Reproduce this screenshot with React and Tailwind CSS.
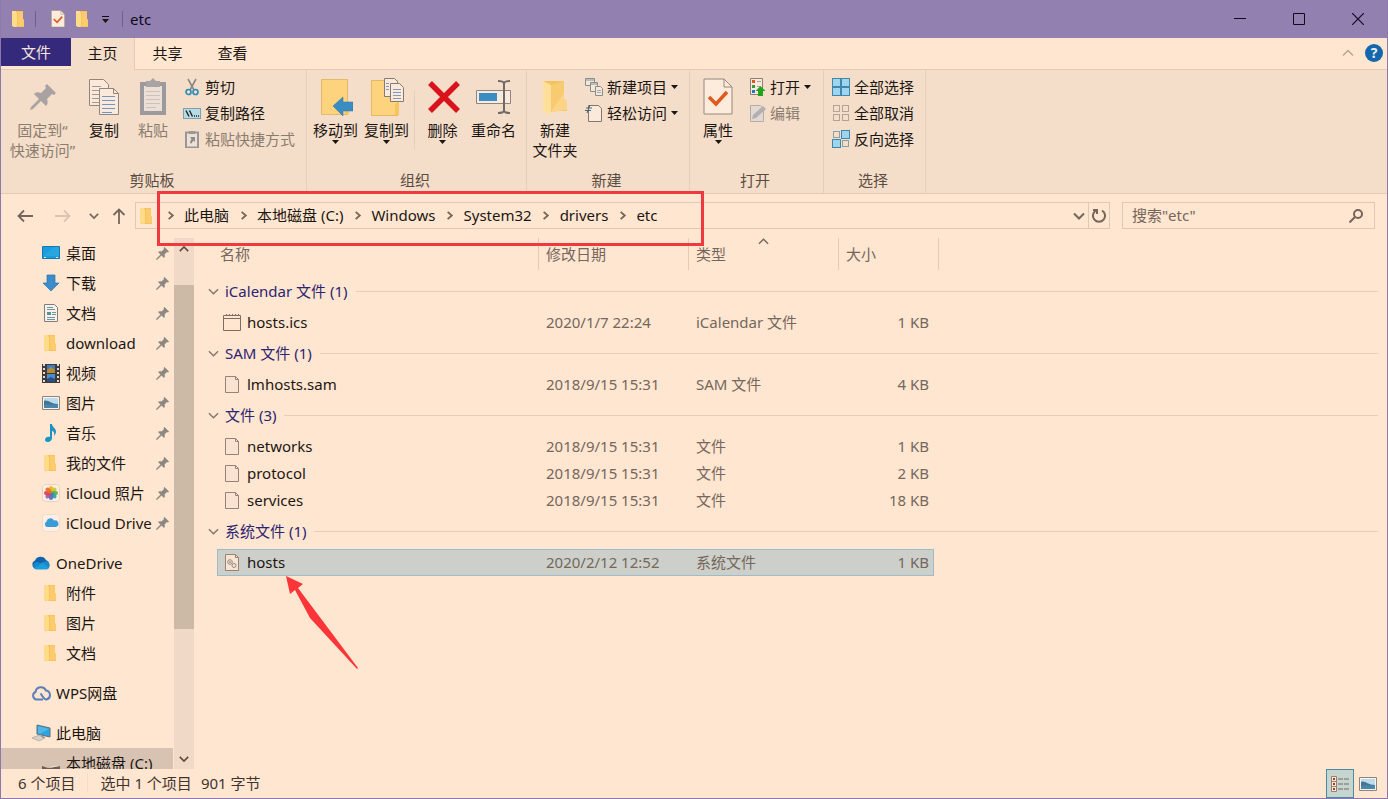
import clsx from 'clsx';

/* ---------- icons ---------- */

function FolderIcon({ className = 'w-[18px] h-[18px]' }) {
  return (
    <svg className={className} viewBox="0 0 18 18">
      <path d="M2 1h11v8l1 1v7H3z" fill="#f9c25c" />
      <path d="M2 1h4l1 3v12l-1 1-4-1z" fill="#ffdb8c" />
      <path d="M8 2h5v7l1 1v6H8z" fill="#fbcb6c" />
    </svg>
  );
}

function PinIcon({ className = 'w-[14px] h-[14px]' }) {
  return (
    <svg className={className} viewBox="0 0 26 26" fill="currentColor">
      <path d="M17 0l9 9-2 2-2-1-5 5c1 3 1 5-1 7l-5-5-8 8-3 1 1-3 8-8-5-5c2-2 4-2 7-1l5-5-1-2z" />
    </svg>
  );
}

function CheckDocIcon({ className }) {
  return (
    <svg className={className} viewBox="0 0 30 38">
      <path d="M1 1h20l8 8v27H1z" fill="#fdebdc" stroke="#94887c" />
      <path d="M21 1v8h8" fill="none" stroke="#94887c" />
      <path d="M6 19l7 7L24 14" fill="none" stroke="#e05a1f" strokeWidth="3.5" />
    </svg>
  );
}

function CopyIcon() {
  return (
    <svg className="w-8 h-[38px]" viewBox="0 0 32 38" fill="#fbeadb" stroke="#92867c">
      <path d="M1.500 1.500h14l5 5v21h-19z" />
      <path d="M4 8.500h9M4 12.500h9M4 16.500h9M4 20.500h9M4 24.500h9" stroke="#a59a92" />
      <path d="M11.500 10.500h14l5 5v21h-19z" />
      <path d="M25.500 10.500v5h5" fill="none" />
      <path d="M14 18.500h13M14 22.500h13M14 26.500h13M14 30.500h13M14 34.500h10" stroke="#6f96c4" />
    </svg>
  );
}

function PasteIcon() {
  return (
    <svg className="w-7 h-[38px]" viewBox="0 0 28 38">
      <path d="M1 4h26v33H1z" fill="#9c9a9d" />
      <path d="M5 8h18v25H5z" fill="#ecdfd5" />
      <path d="M7 3h4l3-3 3 3h4v6H7z" fill="#aaa5a5" />
      <path d="M7 13.500h14M7 17.500h14M7 21.500h14M7 25.500h14M7 29.500h10" stroke="#cdc2ba" />
    </svg>
  );
}

function ScissorsIcon() {
  return (
    <svg className="w-[18px] h-[18px]" viewBox="0 0 18 18" fill="none">
      <path d="M5 1l6 11M13 1L7 12" stroke="#8c8782" strokeWidth="1.600" />
      <circle cx="5.500" cy="14" r="2.500" stroke="#2f8dbb" strokeWidth="1.700" />
      <circle cx="12.500" cy="14" r="2.500" stroke="#2f8dbb" strokeWidth="1.700" />
    </svg>
  );
}

function CopyPathIcon() {
  return (
    <svg className="w-[18px] h-[18px]" viewBox="0 0 18 18">
      <rect x=".5" y="4.500" width="17" height="10" fill="#b9dbe4" stroke="#7ca2ad" />
      <path d="M3 6.500l3 6M6.500 6.500l3 6" stroke="#1e2226" strokeWidth="1.400" />
      <path d="M11 12h1M13 12h1M15 12h1" stroke="#1e2226" strokeWidth="1.400" />
    </svg>
  );
}

function PasteShortcutIcon() {
  return (
    <svg className="w-[18px] h-[18px]" viewBox="0 0 18 18">
      <path d="M3 2.500h12v15H3z" fill="#eee0d5" stroke="#9b9795" strokeWidth="2" />
      <path d="M6 1h6v3H6z" fill="#9b9795" />
      <path d="M7 7h5v5l-1.500-1.500L8 14l-1-2 1.500-3z" fill="#8d8a8c" />
    </svg>
  );
}

function MoveToIcon() {
  return (
    <svg className="w-[34px] h-[38px]" viewBox="0 0 34 38">
      <path d="M2.500 1.500h26v35h-26z" fill="#fdd47d" stroke="#e3b968" />
      <path d="M26 25l4-2v13h-4z" fill="#f7c560" />
      <path d="M14 28l10-9v5h10v9H24v5z" fill="#3a8dc3" stroke="#2c74a5" strokeWidth=".5" />
    </svg>
  );
}

function CopyToIcon() {
  return (
    <svg className="w-[34px] h-10" viewBox="0 0 34 40">
      <path d="M1.500 3.500h26v35h-26z" fill="#fdd47d" stroke="#e3b968" />
      <path d="M25 27l4-2v13h-4z" fill="#f7c560" />
      <g fill="#fbeadb" stroke="#857b72">
        <path d="M14.500 1.500h10l3 3v15h-13z" />
        <path d="M20.500 6.500h9l4 4v14h-13z" />
      </g>
      <path d="M16 6.500h3M16 9.500h3M16 12.500h3M23 12.500h8M23 15.500h8M23 18.500h8M23 21.500h8" stroke="#7d9cbc" />
    </svg>
  );
}

function DeleteIcon() {
  return (
    <svg className="w-[34px] h-8" viewBox="0 0 34 32">
      <path d="M4 2l28 28M32 2L4 30" stroke="#d9121b" strokeWidth="5.500" />
    </svg>
  );
}

function RenameIcon() {
  return (
    <svg className="w-[37px] h-9" viewBox="0 0 37 36" fill="none">
      <path d="M1.500 11.500h34v13h-34z" fill="#fbeadb" stroke="#8d8680" />
      <path d="M4 14h18v8H4z" fill="#3a8dc3" />
      <path d="M23 2c3 0 5 0 6 2 1-2 3-2 6-2M23 34c3 0 5 0 6-2 1 2 3 2 6 2M29 3v30" stroke="#6f6a68" strokeWidth="2" />
    </svg>
  );
}

function NewFolderIcon() {
  return (
    <svg className="w-7 h-9" viewBox="0 0 28 36">
      <path d="M3 2h20v18l3 2v10H6z" fill="#f5c15c" />
      <path d="M2 2l8 4v28l-2 2-6-4z" fill="#ffe09a" />
      <path d="M10 6l13-4v18l3 2v9l-16 2z" fill="#f8cb70" />
      <path d="M11 31L23 14v6l3 2v9l-15 2z" fill="#fddb92" opacity=".6" />
    </svg>
  );
}

function NewItemIcon() {
  return (
    <svg className="w-[18px] h-[18px]" viewBox="0 0 18 18" fill="#f7e6d6" stroke="#84908f">
      <path d="M.5.500h9v7h-9zM1 2h8" />
      <path d="M5.500 4.500h7v9h-7zM5 6h8" />
      <path d="M10.500 8.500h5l2 2v7h-7z" />
      <path d="M12 12.500h4M12 14.500h4" strokeWidth=".7" />
    </svg>
  );
}

function EasyAccessIcon() {
  return (
    <svg className="w-[18px] h-[18px]" viewBox="0 0 18 18" fill="none">
      <path d="M3.500 1.500h10l3 3v13h-13z" fill="#fbeadb" stroke="#84786e" />
      <path d="M0 6.500h6M1 4h6M5 1L2 9" stroke="#4d6676" />
    </svg>
  );
}

function OpenIcon() {
  return (
    <svg className="w-[18px] h-[18px]" viewBox="0 0 18 18">
      <path d="M2.500.500h12v16h-12z" fill="#fbeadb" stroke="#8b8078" />
      <path d="M4 2h3v3H4z" fill="#e3541f" />
      <path d="M4 7h3v3H4z" fill="#2e9d42" />
      <path d="M4 12h3v3H4z" fill="#2b78b7" />
      <path d="M9 3.500h4M9 8.500h3" stroke="#a8a099" />
      <path d="M12.500 8l5 5H15v5h-5v-5H7.500z" fill="#22a31f" />
    </svg>
  );
}

function EditIcon() {
  return (
    <svg className="w-[18px] h-[18px]" viewBox="0 0 18 18">
      <path d="M2.500 1.500h10l3 3v13h-13z" fill="#e4d9d2" stroke="#b5aca6" />
      <path d="M4 15l1-4 10-9 3 3-10 9z" fill="#b3aeb0" />
    </svg>
  );
}

// each cell is lit when its entry in `on` is truthy
function SelectGridIcon({ on, blueEmpty }) {
  const cells = [[1, 1], [10, 1], [1, 10], [10, 10]];
  return (
    <svg className="w-[18px] h-[18px]" viewBox="0 0 18 18">
      {cells.map(([x, y], i) =>
        on[i] ? (
          <rect key={i} x={x - 0.5} y={y - 0.5} width="8" height="8" fill="#9fd4ee" stroke="#3f87ab" />
        ) : (
          <rect key={i} x={x + 0.5} y={y + 0.5} width="6" height="6" fill="none" stroke={blueEmpty ? '#8e9ea5' : '#b3a295'} />
        )
      )}
    </svg>
  );
}

function ChevronIcon({ dir = 'down', className = 'w-3 h-3', width = 2 }) {
  const paths = {
    down: 'M1 3.500L6 8.500 11 3.500',
    up: 'M1 8.500L6 3.500 11 8.500',
    right: 'M4 2L8.500 6 4 10',
  };
  return (
    <svg className={className} viewBox="0 0 12 12" fill="none" stroke="currentColor" strokeWidth={width}>
      <path d={paths[dir]} />
    </svg>
  );
}

function Caret({ className = 'w-[7px] h-1' }) {
  return (
    <svg className={className} viewBox="0 0 7 4" fill="#1c1613">
      <path d="M0 0h7L3.500 4z" />
    </svg>
  );
}

function DesktopIcon() {
  return (
    <svg className="w-[18px] h-[18px]" viewBox="0 0 18 18">
      <path d="M.5 2.500h17v12H.5z" fill="#189ddd" stroke="#1577aa" />
      <path d="M1 12L12 3h5v9z" fill="#35b0e8" opacity=".5" />
      <path d="M2 13.500h2M14 13.500h2" stroke="#d5edf8" />
    </svg>
  );
}

function DownloadIcon() {
  return (
    <svg className="w-[18px] h-[18px]" viewBox="0 0 18 18">
      <path d="M5 1h8v8h4l-8 8-8-8h4z" fill="#3a8ccb" stroke="#2a70a8" strokeWidth=".7" />
    </svg>
  );
}

function DocumentIcon() {
  return (
    <svg className="w-[18px] h-[18px]" viewBox="0 0 18 18">
      <path d="M2.500.500h10l3 3v14h-13z" fill="#fbf0e6" stroke="#7b7f80" />
      <path d="M5 3.500h6M5 5.500h8M10 8.500h4M10 10.500h4M5 13.500h8M5 15.500h8" stroke="#6f93a8" />
      <path d="M5 8h4v3H5z" fill="#4f9795" />
    </svg>
  );
}

function VideoIcon() {
  return (
    <svg className="w-[18px] h-[19px]" viewBox="0 0 18 19">
      <path d="M0 0h18v19H0z" fill="#3d3a38" />
      <path d="M2 0v19M16 0v19" stroke="#e8d8c8" strokeWidth="2" strokeDasharray="2 2" />
      <path d="M5 1h8v8H5z" fill="#3d7bc4" />
      <path d="M5 6l4-3 4 3v3H5z" fill="#b78a35" />
      <path d="M5 10h8v8H5z" fill="#4a8ed0" />
      <path d="M5 15l4-2 4 2v3H5z" fill="#2b4d80" />
    </svg>
  );
}

function PictureIcon() {
  return (
    <svg className="w-[18px] h-[14px]" viewBox="0 0 18 14">
      <path d="M.5.500h17v13H.5z" fill="#fbf2ea" stroke="#90857b" />
      <path d="M2 2h14v10H2z" fill="#bcdcee" />
      <path d="M2 5c4-2 6 3 14 3v2H2z" fill="#44768f" />
      <path d="M2 9c5-1 9 0 14-1v4H2z" fill="#4a86b0" />
    </svg>
  );
}

function MusicIcon() {
  return (
    <svg className="w-[18px] h-[18px]" viewBox="0 0 18 18">
      <path d="M8 0h2c0 3 4 4 4 8 0 1-1 3-2 4 1-4-1-5-2-5v7c0 2-2 4-4 4s-3-1-3-2c0-2 2-4 5-3z" fill="#1b93c4" />
    </svg>
  );
}

function PhotosIcon() {
  const petals = ['#f7b01e', '#c3cc28', '#5db246', '#2f9fa6', '#4a73bd', '#9a5aa8', '#db3f58', '#ee6a25'];
  return (
    <svg className="w-[18px] h-[18px]" viewBox="0 0 18 18">
      <rect x=".5" y=".5" width="17" height="17" rx="3" fill="#fdefe3" stroke="#e5d2c2" />
      {petals.map((color, i) => (
        <ellipse key={color} cx="9" cy="5.500" rx="2.300" ry="3.500" fill={color} opacity=".9" transform={`rotate(${i * 45} 9 9)`} />
      ))}
    </svg>
  );
}

function ICloudIcon() {
  return (
    <svg className="w-[18px] h-[18px]" viewBox="0 0 18 18">
      <rect x=".5" y=".5" width="17" height="17" rx="3" fill="#fdefe3" stroke="#eedccd" />
      <path d="M5 13a3 3 0 0 1-.5-5.500A4 4 0 0 1 12 6.500a3.300 3.300 0 0 1 2 6.500z" fill="#3b9bd8" />
    </svg>
  );
}

function OneDriveIcon() {
  return (
    <svg className="w-5 h-[14px]" viewBox="0 0 20 14">
      <path d="M5 13a4.500 4.500 0 0 1-1-8.500A6 6 0 0 1 15 4a5 5 0 0 1 1 9z" fill="#0f63ad" />
      <path d="M4 13a4 4 0 0 1 1-7l5 1 5-2a4.200 4.200 0 0 1 1 8z" fill="#1b86c8" />
      <path d="M3 12l9-5 6 5-2 1.500H5z" fill="#1a9fdc" />
    </svg>
  );
}

function WpsCloudIcon() {
  return (
    <svg className="w-5 h-4" viewBox="0 0 20 16" fill="none" stroke="#5b7fb8" strokeWidth="2">
      <path d="M12 14.500H5a4 4 0 0 1-.5-7.500A5.500 5.500 0 0 1 15 5.500a4.600 4.600 0 0 1 .5 9c-3 0-4-4-6-6" />
    </svg>
  );
}

function ComputerIcon() {
  return (
    <svg className="w-5 h-[18px]" viewBox="0 0 20 18">
      <path d="M6 1l13 3v9L6 10z" fill="#2fa3df" stroke="#5c6f7c" />
      <path d="M7 2l11 3-9 5-2-1z" fill="#62bdea" opacity=".7" />
      <path d="M1 14l7-3 6 3-6 3z" fill="#d8d0ca" stroke="#a59a90" strokeWidth=".6" />
      <path d="M10 12l4 1-2 1z" fill="#85796f" />
    </svg>
  );
}

function DriveIcon() {
  return (
    <svg className="w-[18px] h-2" viewBox="0 0 18 8">
      <path d="M0 1l6 2 12-2v5l-9 2-9-2z" fill="#6b5d55" />
      <path d="M7 3l11-2H10z" fill="#e8dccf" />
    </svg>
  );
}

function FileIcon({ kind }) {
  if (kind === 'calendar') {
    return (
      <svg className="w-[18px] h-[18px]" viewBox="0 0 18 18" fill="none" stroke="#7d6c61">
        <path d="M.5 1.500h17v15H.5zM.5 4.500h17M3.500 0v2M6.500 0v2M9.500 0v2M12.500 0v2M15.500 0v2" />
      </svg>
    );
  }
  return (
    <svg className="w-[18px] h-[18px]" viewBox="0 0 18 18" fill="none" stroke="#95837a">
      <path d="M2.500.500h10l3 3v13h-13z" fill="#fbe3d2" />
      <path d="M12.500.500v3h3" />
      {kind === 'system' && (
        <g stroke="#8d8a88">
          <circle cx="7" cy="8" r="2.300" />
          <circle cx="11" cy="11.500" r="2" />
          <circle cx="7" cy="8" r=".5" />
        </g>
      )}
    </svg>
  );
}

/* ---------- data ---------- */

const quickAccess = [
  { name: '桌面', icon: <DesktopIcon /> },
  { name: '下载', icon: <DownloadIcon /> },
  { name: '文档', icon: <DocumentIcon /> },
  { name: 'download', icon: <FolderIcon className="w-[18px] h-[18px]" /> },
  { name: '视频', icon: <VideoIcon /> },
  { name: '图片', icon: <PictureIcon /> },
  { name: '音乐', icon: <MusicIcon /> },
  { name: '我的文件', icon: <FolderIcon className="w-[18px] h-[18px]" /> },
  { name: 'iCloud 照片', icon: <PhotosIcon /> },
  { name: 'iCloud Drive', icon: <ICloudIcon /> },
];

const oneDrive = ['附件', '图片', '文档'];

const crumbs = ['此电脑', '本地磁盘 (C:)', 'Windows', 'System32', 'drivers', 'etc'];

const groups = [
  {
    title: 'iCalendar 文件 (1)',
    files: [{ name: 'hosts.ics', date: '2020/1/7 22:24', type: 'iCalendar 文件', size: '1 KB', kind: 'calendar' }],
  },
  {
    title: 'SAM 文件 (1)',
    files: [{ name: 'lmhosts.sam', date: '2018/9/15 15:31', type: 'SAM 文件', size: '4 KB' }],
  },
  {
    title: '文件 (3)',
    files: [
      { name: 'networks', date: '2018/9/15 15:31', type: '文件', size: '1 KB' },
      { name: 'protocol', date: '2018/9/15 15:31', type: '文件', size: '2 KB' },
      { name: 'services', date: '2018/9/15 15:31', type: '文件', size: '18 KB' },
    ],
  },
  {
    title: '系统文件 (1)',
    files: [{ name: 'hosts', date: '2020/2/12 12:52', type: '系统文件', size: '1 KB', kind: 'system', selected: true }],
  },
];

/* ---------- title bar ---------- */

function TitleBar() {
  return (
    <header className="h-[38px] shrink-0 flex items-center bg-[#9180b0] text-[#12091f]">
      <div className="flex items-center pl-[9px]">
        <FolderIcon />
        <span className="w-px h-4 ml-[7px] mr-[14px] bg-[#6f608c]" />
        <button aria-label="属性"><CheckDocIcon className="w-4 h-[18px]" /></button>
        <button aria-label="新建文件夹" className="ml-2"><FolderIcon /></button>
        <button aria-label="自定义快速访问工具栏" className="ml-[10px] flex flex-col items-center gap-0.5">
          <span className="w-[7px] h-px bg-[#12091f]" />
          <Caret />
        </button>
        <span className="w-px h-4 ml-[13px] mr-[7px] bg-[#6f608c]" />
        <h1>etc</h1>
      </div>
      <div className="ml-auto flex h-full">
        <button aria-label="最小化" className="w-[59px] flex items-center justify-center">
          <svg className="w-3 h-3" viewBox="0 0 12 12" stroke="currentColor"><path d="M0 5.500h12" /></svg>
        </button>
        <button aria-label="最大化" className="w-[59px] flex items-center justify-center">
          <svg className="w-3 h-3" viewBox="0 0 12 12" fill="none" stroke="currentColor"><path d="M.5.500h11v11H.5z" /></svg>
        </button>
        <button aria-label="关闭" className="w-[59px] flex items-center justify-center">
          <svg className="w-3 h-3" viewBox="0 0 12 12" stroke="currentColor" strokeWidth="1.200"><path d="M0 0l12 12M12 0L0 12" /></svg>
        </button>
      </div>
    </header>
  );
}

/* ---------- ribbon ---------- */

function RibbonTabs() {
  return (
    <nav className="h-8 shrink-0 flex items-start border-b border-[#e3cbb8]">
      <button className="w-[70px] h-7 bg-[#35297b] text-[#f5e4dc]">文件</button>
      <button className="w-16 h-8 pb-0.5 border-r border-[#e3cbb8] bg-[#f4dec9]">主页</button>
      <button className="w-[65px] h-[30px]">共享</button>
      <button className="w-[65px] h-[30px]">查看</button>
      <div className="ml-auto h-[30px] flex items-center gap-[11px] pr-1">
        <button aria-label="折叠功能区" className="text-[#b9a595]"><ChevronIcon dir="up" width={1.5} /></button>
        <button aria-label="帮助" className="w-[18px] h-[18px] rounded-full bg-[#1467ad] text-[14px] leading-[18px] font-bold text-[#e8eef2]">?</button>
      </div>
    </nav>
  );
}

function BigButton({ icon, lines, width, caret, disabled }) {
  return (
    <button
      disabled={disabled}
      className={clsx('shrink-0 flex flex-col items-center leading-5 whitespace-nowrap', width, disabled && 'text-[#8b7c70]')}
    >
      <span className="h-[46px] flex items-center justify-center">{icon}</span>
      {lines.map(line => <span key={line}>{line}</span>)}
      {caret && <Caret />}
    </button>
  );
}

function SmallButton({ icon, label, caret, disabled }) {
  return (
    <button disabled={disabled} className={clsx('h-[26px] flex items-center gap-1 whitespace-nowrap', disabled && 'text-[#8b7c70]')}>
      {icon}
      <span>{label}</span>
      {caret && <Caret />}
    </button>
  );
}

function RibbonGroup({ label, width, children }) {
  return (
    <section className={clsx('shrink-0 flex flex-col border-r border-[#e6d0bd]', width)}>
      <div className="flex-1 flex items-start pt-1">{children}</div>
      <div className="h-[25px] pr-[3px] text-center leading-6 text-[#5a4c43]">{label}</div>
    </section>
  );
}

function Ribbon() {
  return (
    <div className="h-[124px] shrink-0 flex bg-[#f4dec9] border-b border-[#e3cbb8]">
      <RibbonGroup label="剪贴板" width="w-[306px]">
        <BigButton disabled width="w-[83px]" lines={['固定到“', '快速访问”']} icon={<PinIcon className="w-[26px] h-[26px] text-[#a8a3a2]" />} />
        <BigButton width="w-10" lines={['复制']} icon={<CopyIcon />} />
        <BigButton disabled width="w-[58px]" lines={['粘贴']} icon={<PasteIcon />} />
        <div className="flex flex-col pl-px">
          <SmallButton label="剪切" icon={<ScissorsIcon />} />
          <SmallButton label="复制路径" icon={<CopyPathIcon />} />
          <SmallButton disabled label="粘贴快捷方式" icon={<PasteShortcutIcon />} />
        </div>
      </RibbonGroup>
      <RibbonGroup label="组织" width="w-[220px]">
        <div className="flex pl-[3px]">
          <BigButton caret width="w-[51px]" lines={['移动到']} icon={<MoveToIcon />} />
          <BigButton caret width="w-[51px]" lines={['复制到']} icon={<CopyToIcon />} />
          <span className="w-px h-[60px] mt-4 mx-0.5 bg-[#e6d0bd]" />
          <BigButton caret width="w-[51px]" lines={['删除']} icon={<DeleteIcon />} />
          <BigButton width="w-[51px]" lines={['重命名']} icon={<RenameIcon />} />
        </div>
      </RibbonGroup>
      <RibbonGroup label="新建" width="w-[163px]">
        <BigButton width="w-[56px]" lines={['新建', '文件夹']} icon={<NewFolderIcon />} />
        <div className="flex flex-col pl-0.5">
          <SmallButton caret label="新建项目" icon={<NewItemIcon />} />
          <SmallButton caret label="轻松访问" icon={<EasyAccessIcon />} />
        </div>
      </RibbonGroup>
      <RibbonGroup label="打开" width="w-[134px]">
        <BigButton caret width="w-[56px]" lines={['属性']} icon={<CheckDocIcon className="w-[30px] h-[38px]" />} />
        <div className="flex flex-col pl-0.5">
          <SmallButton caret label="打开" icon={<OpenIcon />} />
          <SmallButton disabled label="编辑" icon={<EditIcon />} />
        </div>
      </RibbonGroup>
      <RibbonGroup label="选择" width="w-[102px]">
        <div className="flex flex-col pl-2">
          <SmallButton label="全部选择" icon={<SelectGridIcon on={[1, 1, 1, 1]} />} />
          <SmallButton label="全部取消" icon={<SelectGridIcon on={[0, 0, 0, 0]} />} />
          <SmallButton label="反向选择" icon={<SelectGridIcon on={[0, 1, 1, 0]} blueEmpty />} />
        </div>
      </RibbonGroup>
    </div>
  );
}

/* ---------- address bar ---------- */

function ArrowIcon({ className }) {
  return (
    <svg className={clsx('w-4 h-4', className)} viewBox="0 0 16 16" fill="none" stroke="currentColor" strokeWidth="1.800">
      <path d="M16 8H2M7 2.500L1.500 8 7 13.500" />
    </svg>
  );
}

function AddressRow() {
  return (
    <div className="relative h-11 shrink-0 flex items-start pt-2 pl-4 pr-3 text-[#75655a]">
      <div className="h-7 w-[118px] flex items-center">
        <button aria-label="后退"><ArrowIcon /></button>
        <button aria-label="前进" disabled className="ml-[22px] text-[#d9c4b3]"><ArrowIcon className="rotate-180" /></button>
        <button aria-label="最近浏览的位置" className="ml-[18px]"><ChevronIcon className="w-[10px] h-[10px]" /></button>
        <button aria-label="上移" className="ml-3"><ArrowIcon className="rotate-90" /></button>
      </div>

      <div className="flex-1 h-[27px] flex items-center border border-[#dfc8b6]">
        <FolderIcon className="w-[18px] h-[18px] ml-0.5" />
        <ol className="flex items-center text-[#1c1613]">
          {crumbs.map(crumb => (
            <li key={crumb} className="flex items-center">
              <span className="w-7 flex justify-center text-[#75655a]"><ChevronIcon dir="right" className="w-[11px] h-[11px]" /></span>
              <button className="pb-0.5 whitespace-nowrap">{crumb}</button>
            </li>
          ))}
        </ol>
        <button aria-label="以前的位置" className="ml-auto mr-[3px]"><ChevronIcon /></button>
        <button aria-label="刷新" className="w-[21px] h-full flex items-center justify-center border-l border-[#dfc8b6]">
          <svg className="w-[14px] h-[15px]" viewBox="0 0 14 15" fill="none" stroke="currentColor" strokeWidth="2">
            <path d="M10 2.500a6 6 0 1 1-6 0M1 2h4v4" />
          </svg>
        </button>
      </div>

      <label className="w-[253px] h-[27px] ml-3 flex items-center border border-[#dfc8b6] pl-[9px] pr-[11px]">
        <input type="search" aria-label="搜索" placeholder={'搜索"etc"'} className="min-w-0 flex-1 pb-0.5 bg-transparent outline-none placeholder:text-[#75655a]" />
        <svg className="w-[14px] h-[14px]" viewBox="0 0 14 14" fill="none" stroke="currentColor" strokeWidth="2">
          <circle cx="9" cy="5" r="4" />
          <path d="M6 8l-5.500 5.500" />
        </svg>
      </label>

      {/* highlight around the path */}
      <div className="absolute z-10 -top-[3px] left-[156px] w-[547px] h-[55px] border-[3px] border-[#ee3a3f] pointer-events-none" />
    </div>
  );
}

/* ---------- navigation pane ---------- */

function NavItem({ icon, name, root, pinned, active }) {
  return (
    <li className={clsx('h-[30px] flex items-center pr-1', root ? 'pl-[30px]' : 'pl-[41px]', active && 'bg-[#d8c3b2]')}>
      <span className={clsx('shrink-0 flex justify-center', root ? 'w-5 mr-[5px]' : 'w-[18px] mr-[6px]')}>{icon}</span>
      <a href="#" className="flex-1 min-w-0 overflow-hidden whitespace-nowrap">{name}</a>
      {pinned && <PinIcon className="w-[13px] h-[13px] shrink-0 ml-0.5 text-[#8d8782]" />}
    </li>
  );
}

function NavPane() {
  return (
    <aside className="w-[193px] shrink-0 flex min-h-0">
      <div className="w-[172px] overflow-hidden flex flex-col gap-[10px]">
        <ul>
          {quickAccess.map(item => <NavItem key={item.name} {...item} pinned />)}
        </ul>
        <ul>
          <NavItem root name="OneDrive" icon={<OneDriveIcon />} />
          {oneDrive.map(name => <NavItem key={name} name={name} icon={<FolderIcon />} />)}
        </ul>
        <ul>
          <NavItem root name="WPS网盘" icon={<WpsCloudIcon />} />
        </ul>
        <ul>
          <NavItem root name="此电脑" icon={<ComputerIcon />} />
          <NavItem active name="本地磁盘 (C:)" icon={<span className="pt-3"><DriveIcon /></span>} />
        </ul>
      </div>
      <div className="w-5 ml-px flex flex-col bg-[#f0dac7] text-[#5d4e44]">
        <button aria-label="向上滚动" className="h-5 flex items-end justify-center pb-1"><ChevronIcon dir="up" className="w-[10px] h-[10px]" /></button>
        <div className="flex-[27]" />
        <div className="flex-[344] bg-[#ccb9a6]" />
        <div className="flex-[120]" />
        <button aria-label="向下滚动" className="h-5 flex items-center justify-center"><ChevronIcon className="w-[10px] h-[10px]" /></button>
      </div>
    </aside>
  );
}

/* ---------- file list ---------- */

function FileRow({ file }) {
  const cell = clsx('p-0 align-top leading-[25px] whitespace-nowrap', file.selected ? 'bg-[#cdd0ca] border-y border-[#9dbcc8]' : 'border-y border-transparent');
  return (
    <tr className="h-[27px] text-[#75675d]">
      <td className="p-0" />
      <td className={clsx(cell, 'relative border-l')}>
        <div className="flex items-center gap-[6px] pl-[5px] text-[#1c1613]">
          <FileIcon kind={file.kind} />
          {file.name}
        </div>
        {file.selected && (
          <svg className="absolute top-[26px] left-[68px] w-[74px] h-[94px] pointer-events-none" viewBox="0 0 74 94">
            <path d="M0 0l17 8-5 4 60 80-1 1L24 42 9 14l-5 4z" fill="#fb3538" />
          </svg>
        )}
      </td>
      <td className={clsx(cell, 'pl-[7px]')}>{file.date}</td>
      <td className={clsx(cell, 'pl-[7px]')}>{file.type}</td>
      <td className={clsx(cell, 'pr-1 text-right border-r')}>{file.size}</td>
      <td className="p-0" colSpan={2} />
    </tr>
  );
}

function FileList() {
  const head = 'relative h-8 p-0 pl-[7px] border-r border-[#e3cbb8] text-left font-normal';
  return (
    <main className="flex-1 min-w-0 overflow-hidden">
      <table className="w-full table-fixed border-separate border-spacing-0">
        <colgroup>
          <col className="w-[23px]" />
          <col className="w-[322px]" />
          <col className="w-[150px]" />
          <col className="w-[150px]" />
          <col className="w-[95px]" />
          <col className="w-[5px]" />
          <col />
        </colgroup>
        <thead className="text-[#75675d]">
          <tr>
            <td className="p-0" />
            <th className="h-8 p-0 pl-[3px] border-r border-[#e3cbb8] text-left font-normal">名称</th>
            <th className={head}>修改日期</th>
            <th className={head}>
              类型
              <ChevronIcon dir="up" width={1.5} className="absolute -top-0.5 left-[69px] w-[11px] h-[11px]" />
            </th>
            <th className="h-8 p-0 pl-[7px] text-left font-normal">大小</th>
            <td className="p-0 border-r border-[#e3cbb8]" />
            <td className="p-0" />
          </tr>
          <tr className="h-1"><td colSpan={7} className="p-0" /></tr>
        </thead>
        {groups.map(group => (
          <tbody key={group.title}>
            <tr className="h-[35px]">
              <th colSpan={7} className="p-0 font-normal">
                <div className="flex items-center pl-[14px] pr-[9px] text-[#2b2470]">
                  <ChevronIcon width={1.5} className="w-[11px] h-[11px] text-[#85756a]" />
                  <span className="ml-[6px] mr-2 pb-0.5">{group.title}</span>
                  <span className="flex-1 h-px bg-[#e6cdbb]" />
                </div>
              </th>
            </tr>
            {group.files.map(file => <FileRow key={file.name} file={file} />)}
          </tbody>
        ))}
      </table>
    </main>
  );
}

/* ---------- status bar ---------- */

function StatusBar() {
  return (
    <footer className="h-[29px] shrink-0 flex items-center pl-[17px] text-[#3f352f]">
      <p className="flex items-center pb-0.5">
        <span>6 个项目</span>
        <span className="w-px h-5 mx-3 bg-[#f5dcc7]" />
        <span>选中 1 个项目</span>
        <span className="ml-[9px]">901 字节</span>
      </p>
      <div className="ml-auto h-full flex pr-[5px]">
        <button aria-label="详细信息" className="w-7 h-full flex items-center justify-center border border-[#4a8aa3] bg-[#c6d5d0]">
          <svg className="w-[18px] h-4" viewBox="0 0 18 16" fill="#fbeadb">
            <path d="M.5.500h5v5h-5zM.5 5.500h5v5h-5zM.5 10.500h5v5h-5z" stroke="#9b7e70" />
            <path d="M2 3h2M2 8h2M2 13h2" stroke="#9a3f2a" strokeWidth="2" />
            <path d="M7 3h5M13 3h5M7 8h5M13 8h5M7 13h5M13 13h5" stroke="#756b65" />
          </svg>
        </button>
        <button aria-label="大图标" className="w-7 h-full flex items-center justify-center"><PictureIcon /></button>
      </div>
    </footer>
  );
}

export default function App() {
  return (
    <div className="h-screen flex flex-col overflow-hidden border border-t-0 border-[#8d78ab] bg-[#ffe6d0] text-[15px] leading-5 text-[#1c1613] font-['Noto_Sans','Noto_Sans_CJK_SC',sans-serif]">
      <TitleBar />
      <RibbonTabs />
      <Ribbon />
      <AddressRow />
      <div className="flex-1 min-h-0 flex">
        <NavPane />
        <FileList />
      </div>
      <StatusBar />
    </div>
  );
}
